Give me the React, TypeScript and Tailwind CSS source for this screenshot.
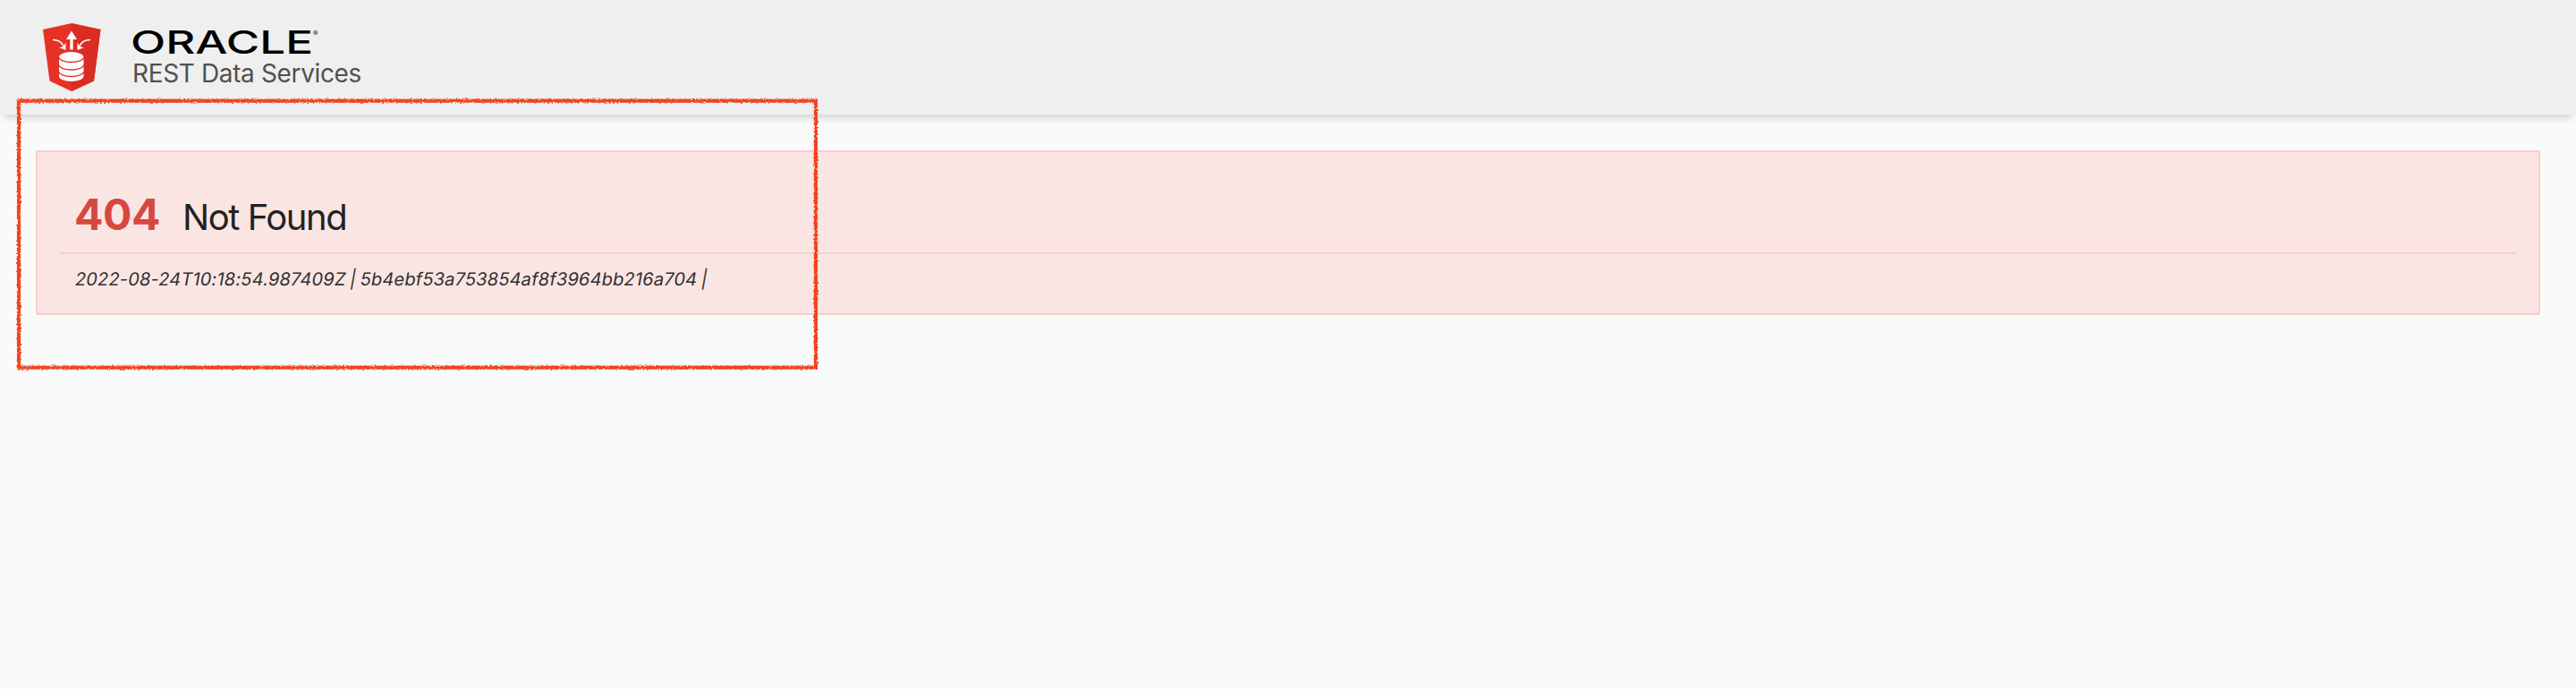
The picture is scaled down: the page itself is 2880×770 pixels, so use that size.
function ShieldLogo() {
  return (
    <svg width="66" height="76" viewBox="0 0 66 76" className="block shrink-0" aria-hidden="true">
      <path d="M33 0 65.500 7 58 64.500 33 76 8.500 64.500 1 7Z" fill="#e63125" />
      <path d="M33 0 65.500 7 58 64.500 33 76Z" fill="#d92d23" />
      <path d="M33 8.500 39 18H34.700V29.500H31.300V18H27Z" fill="#fff" />
      <path d="M12 18.500Q21 18.500 23.500 25M54 18.500Q45 18.500 42.500 25" fill="none" stroke="#fff" strokeWidth="1.500" />
      <path d="M26.500 21.500V30L19 27Q24 27 26.500 21.500ZM39.500 21.500V30L47 27Q42 27 39.500 21.500Z" fill="#fff" />
      <path d="M19 38A13.700 6 0 0 1 46.500 38V59A13.700 6 0 0 1 19 59Z" fill="#fff" />
      <path d="M19 38A13.700 5.500 0 0 0 46.500 38M19 46.500A13.700 5.500 0 0 0 46.500 46.500M19 54A13.700 5.500 0 0 0 46.500 54" fill="none" stroke="#df3026" strokeWidth="1.300" />
    </svg>
  );
}

function Wordmark() {
  return (
    <svg width="210" height="30" viewBox="0 0 210 30" className="block overflow-visible" role="img" aria-label="Oracle">
      <text x="-2" y="27.500" fontFamily="Inter, sans-serif" fontWeight="500" fontSize="35.500" textLength="204" lengthAdjust="spacingAndGlyphs" fill="#000">
        ORACLE
      </text>
      <text x="202" y="8" fontFamily="Inter, sans-serif" fontSize="8" fill="#000">®</text>
    </svg>
  );
}

function CrayonFrame() {
  return (
    <svg width="912" height="320" viewBox="0 0 912 320" className="pointer-events-none absolute left-[10px] top-[100px]" aria-hidden="true">
      <defs>
        <filter id="crayon" filterUnits="userSpaceOnUse" x="0" y="0" width="912" height="320">
          <feTurbulence type="fractalNoise" baseFrequency="0.45" numOctaves="2" seed="4" />
          <feDisplacementMap in="SourceGraphic" scale="3.500" xChannelSelector="R" yChannelSelector="G" />
        </filter>
      </defs>
      <rect x="11" y="12.700" width="891" height="298" fill="none" stroke="#f04424" strokeWidth="4.200" filter="url(#crayon)" />
    </svg>
  );
}

export default function App() {
  return (
    <div className="relative min-h-[770px] w-full bg-[#f9fbfa] font-['Inter',sans-serif] text-[#222]">
      <header className="flex h-32 items-start bg-[#efefef] pl-[47px] pt-[26px] shadow-[0_8px_8px_-4px_rgba(0,0,0,0.15)]">
        <ShieldLogo />
        <div className="ml-[35px] pt-[6px]">
          <Wordmark />
          <div className="mt-[3px] text-[28px] leading-[34px] tracking-[-0.36px] text-[#505050]">REST Data Services</div>
        </div>
      </header>
      <main className="px-10 pt-10">
        <section className="h-[184px] rounded-[3px] border-2 border-[#f7cec7] bg-[#fae5e3] px-6">
          <div className="flex h-[114px] items-baseline border-b-2 border-[#f7cec7] pl-[17px] pt-10">
            <span className="text-[48px] font-bold leading-[60px] tracking-[-0.4px] text-[#d6483f]">404</span>
            <h1 className="ml-[25px] text-[40px] leading-[60px] tracking-[-1.45px]">Not Found</h1>
          </div>
          <p className="origin-bottom-left -skew-x-[10deg] pl-4 pt-4 text-[20px] leading-6 tracking-[0.18px] text-[#303030] [word-spacing:-1.2px]">
            2022-08-24T10:18:54.987409Z | 5b4ebf53a753854af8f3964bb216a704 |
          </p>
        </section>
      </main>
      <CrayonFrame />
    </div>
  );
}
